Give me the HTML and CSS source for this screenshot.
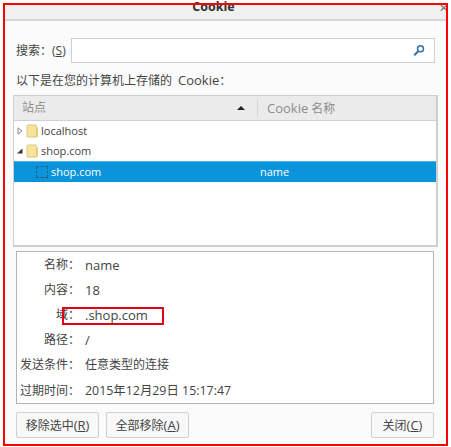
FILE: index.html
```html
<!DOCTYPE html>
<html lang="zh">
<head>
<meta charset="utf-8">
<title>Cookie</title>
<link rel="stylesheet" href="styles.css">
</head>
<body>
<div class="dialog">
  <header class="titlebar"><span class="title">Cookie</span><span class="close">×</span></header>
  <div class="search-row">
    <label class="search-label">搜索：(<u>S</u>)</label>
    <div class="search-box">
      <svg class="search-icon" width="12" height="13" viewBox="0 0 12 13"><circle cx="7.500" cy="4.800" r="3" fill="none" stroke="#2f6ea8" stroke-width="1.500"/><path d="M5.200 7.200 1.300 11.300" stroke="#2f6ea8" stroke-width="2"/></svg>
    </div>
  </div>
  <p class="hint">以下是在您的计算机上存储的<span class="lat hint-word">Cookie</span>：</p>
  <section class="tree">
    <div class="tree-head">
      <div class="col-site"><span>站点</span><i class="sort"></i></div>
      <div class="col-name"><span class="lat">Cookie</span> 名称</div>
    </div>
    <div class="row">
      <svg class="twisty" width="6" height="8" viewBox="0 0 6 8"><path d="M1 .8 5 4 1 7.200Z" fill="#fff" stroke="#8a8a8a"/></svg>
      <svg class="folder" width="13" height="14" viewBox="0 0 13 14"><path d="M1 2.500Q1 1 2.500 1H9.500Q10.500 1 10.500 2.500V13H2Q1 13 1 12Z" fill="#f6e49b" stroke="#d9c77f"/><path d="M10.500 3.500H12V13H10.500Z" fill="#e6cf7d"/></svg>
      <span>localhost</span>
    </div>
    <div class="row">
      <svg class="twisty" width="6" height="8" viewBox="0 0 6 8"><path d="M0 6.500 5.500 1.500V6.500Z" fill="#333"/></svg>
      <svg class="folder" width="13" height="14" viewBox="0 0 13 14"><path d="M1 2.500Q1 1 2.500 1H9.500Q10.500 1 10.500 2.500V13H2Q1 13 1 12Z" fill="#f6e49b" stroke="#d9c77f"/><path d="M10.500 3.500H12V13H10.500Z" fill="#e6cf7d"/></svg>
      <span>shop.com</span>
    </div>
    <div class="row selected">
      <i class="cookie-icon"></i>
      <span class="cell-site">shop.com</span>
      <span>name</span>
    </div>
  </section>
  <section class="details">
    <div class="detail"><span class="key">名称：</span><span class="lat">name</span></div>
    <div class="detail"><span class="key">内容：</span><span class="lat">18</span></div>
    <div class="detail"><span class="key">域：</span><span class="lat">.shop.com</span></div>
    <div class="detail"><span class="key">路径：</span><span class="lat">/</span></div>
    <div class="detail"><span class="key">发送条件：</span><span>任意类型的连接</span></div>
    <div class="detail"><span class="key">过期时间：</span><span class="date">2015年12月29日 15:17:47</span></div>
  </section>
  <footer class="actions">
    <button class="btn">移除选中<span class="lat">(<u>R</u>)</span></button>
    <button class="btn">全部移除<span class="lat">(<u>A</u>)</span></button>
    <button class="btn btn-close">关闭<span class="lat">(<u>C</u>)</span></button>
  </footer>
</div>
<div class="mark-frame"></div>
<div class="mark-domain"></div>
</body>
</html>
```
FILE: styles.css
```css
* { box-sizing: border-box; }
html, body { margin: 0; padding: 0; }
body {
  width: 451px;
  height: 447px;
  background: #fff;
  overflow: hidden;
  position: relative;
  font: 12px/16px "Open Sans", "Noto Sans CJK TC", sans-serif;
  color: #444;
  padding: 3px 3px 1px 3px;
}
.lat { font-size: 13px; }
.dialog {
  height: 443px;
  background: #fbfbfb;
  padding: 0 10px;
  display: flex;
  flex-direction: column;
}
.titlebar {
  height: 18px;
  flex: none;
  margin: 0 -10px;
  background: #f0f0f0;
  border-bottom: 2px solid #d8d8d8;
  position: relative;
  display: flex;
  justify-content: center;
}
.title {
  font-weight: 700;
  font-size: 12.500px;
  line-height: 8px;
  color: #333;
  margin-right: 24px;
}
.close {
  position: absolute;
  right: 0;
  top: -4px;
  font-size: 15px;
  line-height: 16px;
  color: #666;
}
.search-row {
  display: flex;
  align-items: center;
  margin: 17px 0 0 3px;
}
.search-label { width: 55px; flex: none; }
.search-box {
  width: 364px;
  height: 25px;
  background: #fff;
  border: 1px solid #d0d0d0;
  display: flex;
  align-items: center;
  justify-content: flex-end;
  padding-right: 9px;
}
.hint { margin: 9px 0 0 3px; }
.hint-word { margin-left: 6px; }
.tree {
  margin-top: 6px;
  width: 425px;
  height: 152px;
  flex: none;
  background: #fff;
  border: 1px solid #cfcfcf;
  border-width: 1px 2px 2px 1px;
}
.tree-head {
  display: flex;
  height: 25px;
  background: #ebebeb;
  border-bottom: 1px solid #d0d0d0;
  color: #8c8c8c;
  align-items: center;
}
.col-site {
  width: 244px;
  height: 16px;
  padding: 0 12px 0 8px;
  display: flex;
  justify-content: space-between;
  align-items: center;
  border-right: 1px solid #d4d4d4;
}
.sort {
  width: 0;
  height: 0;
  border: 4px solid transparent;
  border-top: 0;
  border-bottom: 4px solid #222;
}
.col-name { padding-left: 9px; }
.row {
  height: 20px;
  display: flex;
  align-items: center;
  padding-left: 3px;
  font-size: 11px;
  color: #444;
}
.twisty { flex: none; margin-right: 3px; }
.folder { flex: none; margin-right: 2px; }
.selected {
  height: 21px;
  background: #0a94dc;
  border-top: 1px solid #55b1e4;
  color: #fff;
}
.cookie-icon {
  width: 12px;
  height: 12px;
  border: 1px dashed #2a5f86;
  margin: 0 3px 0 19px;
  flex: none;
}
.cell-site { width: 209px; flex: none; }
.details {
  margin: 4px 0 0 3px;
  width: 418px;
  height: 153px;
  flex: none;
  background: #fff;
  border: 1px solid #b4b4b4;
}
.detail {
  display: flex;
  height: 25.200px;
  align-items: center;
}
.key {
  width: 63px;
  margin-right: 5px;
  text-align: right;
  flex: none;
}
.date { font-size: 12.400px; }
.actions {
  display: flex;
  gap: 7px;
  margin: 8px 0 0 3px;
  width: 418px;
}
.btn {
  width: 83px;
  height: 26px;
  padding: 0;
  background: #f8f8f8;
  border: 1px solid #d0d0d0;
  border-radius: 2px;
  font: inherit;
  color: #444;
}
.btn-close { width: 63px; margin-left: auto; }
.mark-frame {
  position: absolute;
  left: 3px;
  top: 3px;
  width: 445px;
  height: 443px;
  border: 2px solid #f00;
  pointer-events: none;
}
.mark-domain {
  position: absolute;
  left: 62px;
  top: 307px;
  width: 102px;
  height: 18px;
  border: 2px solid #e0001a;
  pointer-events: none;
}
```
